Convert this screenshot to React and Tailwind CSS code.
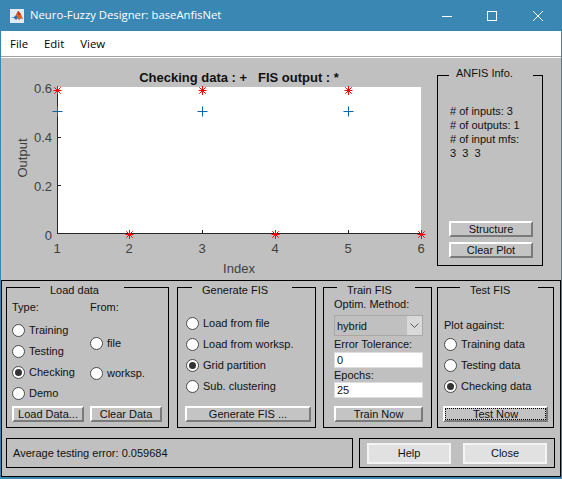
import { useState } from "react";

const xTicks = [
  { label: "1", x: 57 },
  { label: "2", x: 129 },
  { label: "3", x: 202 },
  { label: "4", x: 275 },
  { label: "5", x: 348 },
  { label: "6", x: 421 },
];
const yTicks = [
  { label: "0.6", y: 88.5 },
  { label: "0.4", y: 137.5 },
  { label: "0.2", y: 186 },
  { label: "0", y: 235 },
];
const stars = [[57, 90], [202, 90], [348, 90], [129, 234], [275, 234], [421, 234]];
const pluses = [[57, 111], [202, 111], [348, 111]];

function Star({ x, y }) {
  return (
    <g stroke="#ff0000" strokeWidth="1">
      <path d={`M${x - 4} ${y}H${x + 4}M${x} ${y - 4.5}V${y + 4.5}`} />
      <path d={`M${x - 3.2} ${y - 3.2}L${x + 3.2} ${y + 3.2}M${x - 3.2} ${y + 3.2}L${x + 3.2} ${y - 3.2}`} />
    </g>
  );
}

function Plot() {
  return (
    <svg width="436" height="222" viewBox="1 58 436 222" className="shrink-0">
      <rect x="57" y="87" width="364" height="147" fill="#ffffff" />
      <text x="239" y="81.5" textAnchor="middle" fontSize="13" fontWeight="700" fill="#111" style={{ whiteSpace: "pre" }}>
        {"Checking data : +   FIS output : *"}
      </text>
      <path d="M57.5 88V234M57 233.5H421" stroke="#262626" strokeWidth="1" fill="none" />
      <path d="M58 185.5h3M58 137.5h3M202.5 233v-3M348.5 233v-3" stroke="#262626" strokeWidth="1" />
      {yTicks.map((t) => (
        <text key={t.label} x="52" y={t.y + 4.5} textAnchor="end" fontSize="13" fill="#404040">{t.label}</text>
      ))}
      {xTicks.map((t) => (
        <text key={t.label} x={t.x} y="253" textAnchor="middle" fontSize="13" fill="#404040">{t.label}</text>
      ))}
      <text x="239" y="272.5" textAnchor="middle" fontSize="13" fill="#404040">Index</text>
      <text x="0" y="0" transform="translate(27 158) rotate(-90)" textAnchor="middle" fontSize="13" fill="#404040">Output</text>
      {pluses.map(([x, y]) => (
        <path key={x} d={`M${x - 4.5} ${y + 0.5}h10M${x + 0.5} ${y - 4.5}v10`} stroke="#0b63a8" strokeWidth="1" />
      ))}
      {stars.map(([x, y]) => (
        <Star key={x} x={x + 0.5} y={y + 0.5} />
      ))}
    </svg>
  );
}

function Radio({ label, checked }) {
  return (
    <div className="flex h-[21px] items-center gap-[4px]">
      <span className="flex h-[13px] w-[13px] shrink-0 items-center justify-center rounded-full border border-[#4a4a4a] bg-white">
        {checked && <span className="h-[7px] w-[7px] rounded-full bg-[#333333]" />}
      </span>
      <span>{label}</span>
    </div>
  );
}

function Button({ children, className = "" }) {
  return (
    <button className={`block h-[16px] border-t-2 border-l-2 border-r-2 border-b-2 border-t-white border-l-white border-r-[#7a7a7a] border-b-[#7a7a7a] bg-[#c4c4c4] text-center leading-[12px] ${className}`}>
      {children}
    </button>
  );
}

function BigButton({ children }) {
  return (
    <button className="h-[21px] w-[84px] border-2 border-[#f4f4f4] bg-[#e1e1e1] leading-[16px]">
      {children}
    </button>
  );
}

function Frame({ title, gapLeft, gapWidth, className = "", children }) {
  return (
    <fieldset className={`h-[147px] shrink-0 border border-black ${className}`}>
      <legend style={{ marginLeft: gapLeft, width: gapWidth }} className="h-[12px] pl-[10px] text-left leading-[18px]">
        {title}
      </legend>
      {children}
    </fieldset>
  );
}

export default function App() {
  const [method] = useState("hybrid");

  return (
    <div className="h-[479px] w-[562px] overflow-hidden bg-[#3a87b4] pb-[2px] pl-[1px] pr-[1px] font-['Liberation_Sans',Arial,sans-serif] text-[11px] text-[#111111]">
      {/* Title bar */}
      <div className="-ml-[1px] flex h-[31px] items-center font-['Open_Sans',sans-serif] text-white">
        <svg width="14" height="14" viewBox="0 0 14 14" className="ml-[10px] shrink-0">
          <rect width="14" height="14" fill="#e3eaf0" />
          <path d="M1 9l3-1 2-2 2-4 2 2 1 2 2 4-2-1-2 2-1-2-2 2-2-2z" fill="#2a6fa8" />
          <path d="M6 6l2-4 2 2 1 2 2 4-2-1-2 2-1-2z" fill="#e8601c" />
          <path d="M8 2l2 2 1 2-3 0z" fill="#c6321c" />
        </svg>
        <span className="ml-[6px] text-[11.3px]">Neuro-Fuzzy Designer: baseAnfisNet</span>
        <div className="ml-auto flex items-center">
          <svg width="12" height="12" viewBox="0 0 12 12" className="mr-[33px]" stroke="white" fill="none">
            <path d="M1 6.5H11" />
          </svg>
          <svg width="12" height="12" viewBox="0 0 12 12" className="mr-[34px]" stroke="white" fill="none">
            <rect x="1.5" y="1.5" width="9" height="9" />
          </svg>
          <svg width="12" height="12" viewBox="0 0 12 12" className="mr-[17px]" stroke="white" fill="none">
            <path d="M1 1L11 11M11 1L1 11" />
          </svg>
        </div>
      </div>

      {/* Menu */}
      <div className="flex h-[25px] items-center gap-[16px] bg-white pl-[9px] font-['Open_Sans',sans-serif] text-[11.4px] text-black">
        <span>File</span>
        <span>Edit</span>
        <span>View</span>
      </div>
      <div className="h-[2px] border-t border-[#a0a0a0] bg-white" />

      <div className="h-[419px] bg-[#c0c0c0]">
        {/* Plot and info */}
        <div className="flex h-[222px]">
          <Plot />
          <fieldset className="mt-[10px] h-[198px] w-[106px] border border-black">
            <legend className="ml-[11px] h-[14px] w-[84px] pl-[7px] text-left leading-[10px]">ANFIS Info.</legend>
            <div className="pl-[12px] pt-[22px] leading-[14px]">
              <p># of inputs: 3</p>
              <p># of outputs: 1</p>
              <p># of input mfs:</p>
              <p className="whitespace-pre">3  3  3</p>
            </div>
            <div className="mt-[61px] flex flex-col gap-[5px] pl-[11px]">
              <Button className="w-[84px]">Structure</Button>
              <Button className="w-[84px]">Clear Plot</Button>
            </div>
          </fieldset>
        </div>

        {/* Bottom controls */}
        <div className="h-[197px] w-[560px] border border-black pl-[4px] pt-0">
          <div className="flex">
            <Frame title="Load data" gapLeft={33} gapWidth={84} className="mr-[8px] w-[163px]">
              <div className="flex pl-[5px] pt-[7px]">
                <div className="w-[78px]">
                  <p className="h-[14px] leading-[14px]">Type:</p>
                  <div className="mt-[6px]">
                    <Radio label="Training" />
                    <Radio label="Testing" />
                    <Radio label="Checking" checked />
                    <Radio label="Demo" />
                  </div>
                </div>
                <div>
                  <p className="h-[14px] leading-[14px]">From:</p>
                  <div className="mt-[19px]">
                    <Radio label="file" />
                  </div>
                  <div className="mt-[9px]">
                    <Radio label="worksp." />
                  </div>
                </div>
              </div>
              <div className="mt-[2px] flex gap-[6px] pl-[5px]">
                <Button className="w-[72px]">Load Data...</Button>
                <Button className="w-[72px]">Clear Data</Button>
              </div>
            </Frame>

            <Frame title="Generate FIS" gapLeft={14} gapWidth={100} className="mr-[7px] w-[139px]">
              <div className="pl-[8px] pt-[20px]">
                <Radio label="Load from file" />
                <Radio label="Load from worksp." />
                <Radio label="Grid partition" checked />
                <Radio label="Sub. clustering" />
              </div>
              <Button className="ml-[7px] mt-[9px] w-[126px]">Generate FIS ...</Button>
            </Frame>

            <Frame title="Train FIS" gapLeft={13} gapWidth={78} className="mr-[5px] w-[109px]">
              <div className="pl-[10px] pt-[4px] leading-[14px]">
                <p className="h-[14px]">Optim. Method:</p>
                <div className="mt-[4px] flex h-[21px] w-[89px] items-center border border-[#a8a8a8] bg-[#c0c0c0] pl-[2px]">
                  <span>{method}</span>
                  <span className="ml-auto flex h-full w-[15px] items-center justify-center bg-[#d9d9d9]">
                    <svg width="9" height="6" viewBox="0 0 9 6" fill="none" stroke="#555555">
                      <path d="M0.5 0.5L4.5 4.5L8.5 0.5" />
                    </svg>
                  </span>
                </div>
                <p className="mt-[1px] h-[14px]">Error Tolerance:</p>
                <div className="mt-[1px] h-[16px] w-[89px] border border-[#dddddd] bg-white pl-[2px]">0</div>
                <p className="h-[14px]">Epochs:</p>
                <div className="h-[16px] w-[89px] border border-[#dddddd] bg-white pl-[2px]">25</div>
              </div>
              <Button className="ml-[10px] mt-[8px] w-[89px]">Train Now</Button>
            </Frame>

            <Frame title="Test FIS" gapLeft={22} gapWidth={78} className="w-[117px]">
              <div className="pl-[6px] pt-[25px]">
                <p className="h-[14px] leading-[14px]">Plot against:</p>
                <div className="mt-[2px]">
                  <Radio label="Training data" />
                  <Radio label="Testing data" />
                  <Radio label="Checking data" checked />
                </div>
              </div>
              <Button className="ml-[5px] mt-[9px] w-[105px]">
                <span className="block h-[12px] border border-dotted border-black leading-[10px]">Test Now</span>
              </Button>
            </Frame>
          </div>

          <div className="mt-[10px] flex gap-[6px]">
            <div className="flex h-[30px] w-[347px] items-center border border-black pl-[6px]">
              Average testing error: 0.059684
            </div>
            <div className="flex h-[30px] w-[196px] items-center gap-[12px] border border-black pl-[7px]">
              <BigButton>Help</BigButton>
              <BigButton>Close</BigButton>
            </div>
          </div>
        </div>
      </div>
    </div>
  );
}
